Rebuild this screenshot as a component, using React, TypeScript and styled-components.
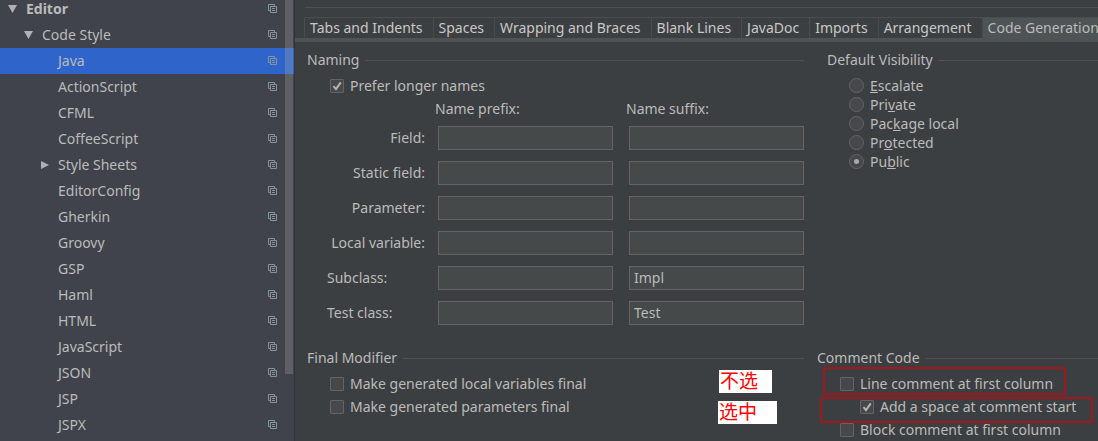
import React from "react";
import styled, { createGlobalStyle, css } from "styled-components";

const c = {
  panel: "#3c3f41",
  tree: "#40434b",
  selected: "#2f65ca",
  text: "#bbbbbb",
  rule: "#515151",
  field: "#45494a",
  fieldBorder: "#646464",
  tabActive: "#4e5354",
  tabBorder: "#4a4c4d",
  mark: "#a31619",
};

const GlobalStyle = createGlobalStyle`
  *, *::before, *::after { box-sizing: border-box; }
  body {
    margin: 0;
    background: ${c.panel};
    color: ${c.text};
    font: 14px/20px "Noto Sans", "Noto Sans CJK SC", sans-serif;
  }
`;

const Window = styled.div`
  display: flex;
  height: 100vh;
  overflow: hidden;
`;

const Sidebar = styled.nav`
  position: relative;
  flex: none;
  width: 295px;
  overflow: hidden;
  background: ${c.tree};
  border-right: 1px solid #323436;
`;

const Tree = styled.ul`
  margin: -4px 0 0;
  padding: 0;
  list-style: none;
`;

const TreeLink = styled.a<{ $level: number; $bold?: boolean; $selected?: boolean }>`
  display: flex;
  align-items: center;
  gap: 8px;
  height: 26px;
  padding: 0 16px 0 ${(p) => 8 + p.$level * 16}px;
  color: ${c.text};
  text-decoration: none;
  font-weight: ${(p) => (p.$bold ? 700 : 400)};
  background: ${(p) => (p.$selected ? c.selected : "transparent")};
`;

const Arrow = styled.svg`
  flex: none;
  width: 10px;
  height: 10px;
  fill: #afb1b3;
`;

const TreeLabel = styled.span`
  flex: 1;
`;

const CopyGlyph = styled.svg`
  flex: none;
  width: 10px;
  height: 10px;
  fill: none;
  stroke: #87939a;
`;

const ScrollThumb = styled.div`
  position: absolute;
  top: 0;
  right: 1px;
  width: 8px;
  height: 374px;
  background: rgba(166, 166, 166, 0.3);
`;

const Main = styled.main`
  flex: 1;
  min-width: 0;
  padding-top: 7px;
`;

const TopRule = styled.div`
  height: 1px;
  margin-left: 10px;
  background: ${c.rule};
`;

const TabBar = styled.div`
  display: flex;
  margin-top: 9px;
  padding-left: 9px;
  overflow: hidden;
  border-bottom: 4px solid ${c.tabActive};
`;

const Tab = styled.button<{ $active?: boolean }>`
  flex: none;
  height: 21px;
  padding: 0 10px 0 5px;
  border: solid ${c.tabBorder};
  border-width: 1px 0 0 1px;
  background: ${(p) => (p.$active ? c.tabActive : "transparent")};
  color: ${(p) => (p.$active ? c.text : "#c8c8c8")};
  font: inherit;
  text-align: left;
  white-space: nowrap;

  &:last-child {
    flex: 1 0 auto;
  }
`;

const Columns = styled.div<{ $gap: number }>`
  display: grid;
  grid-template-columns: minmax(0, 497fr) minmax(0, ${(p) => 294 - p.$gap}fr);
  column-gap: ${(p) => p.$gap}px;
  padding-left: 12px;
`;

const Panel = styled.div`
  display: flex;
  flex-direction: column;
  gap: 23px;
  padding-top: 8px;
`;

const Group = styled.section`
  min-width: 0;
`;

const GroupTitle = styled.h2`
  display: flex;
  align-items: center;
  gap: 6px;
  margin: 0 0 4px;
  font-size: 14px;
  font-weight: 400;
  white-space: nowrap;

  &::after {
    content: "";
    flex: 1;
    height: 1px;
    background: ${c.rule};
  }
`;

const OptionRow = styled.div<{ $indent?: boolean }>`
  position: relative;
  display: flex;
  align-items: center;
  height: 23px;
  padding-left: ${(p) => (p.$indent ? 43 : 23)}px;
`;

const OptionLabel = styled.label`
  display: flex;
  align-items: center;
  gap: 6px;
  white-space: nowrap;
`;

const control = css`
  appearance: none;
  flex: none;
  display: grid;
  place-items: center;
  margin: 0;
  border: 1px solid ${c.fieldBorder};
  background: ${c.field};
`;

const TickBox = styled.input`
  ${control}
  width: 14px;
  height: 14px;
  border-radius: 1px;
`;

const TickHolder = styled.span`
  position: relative;
  display: flex;
`;

const Tick = styled.svg`
  position: absolute;
  inset: 0;
  width: 14px;
  height: 14px;
  fill: none;
  stroke: #b4b4b4;
  stroke-width: 2;
  pointer-events: none;
  visibility: hidden;

  input:checked + & {
    visibility: visible;
  }
`;

const RadioList = styled.div`
  padding: 2px 0 0 22px;
`;

const RadioLabel = styled(OptionLabel)`
  height: 19px;
`;

const RadioButton = styled.input`
  ${control}
  width: 15px;
  height: 15px;
  border-radius: 50%;

  &:checked::after {
    content: "";
    width: 5px;
    height: 5px;
    border-radius: 50%;
    background: #aaaaaa;
  }
`;

const NameGrid = styled.div`
  display: grid;
  grid-template-columns: 98px minmax(0, 1fr) minmax(0, 1fr);
  column-gap: 16px;
  row-gap: 11px;
  align-items: center;
  padding-left: 17px;
`;

const NameHead = styled.div`
  grid-column: 2;
  height: 18px;
  line-height: 24px;
  margin-left: -3px;

  & + & {
    grid-column: 3;
  }
`;

const NameLabel = styled.label<{ $start?: boolean }>`
  margin: 0 -3px 0 3px;
  text-align: ${(p) => (p.$start ? "left" : "right")};
  white-space: nowrap;
`;

const NameInput = styled.input`
  width: 100%;
  height: 24px;
  padding: 0 4px 2px;
  border: 1px solid ${c.fieldBorder};
  background: ${c.field};
  color: ${c.text};
  font: inherit;
  outline: none;
`;

const Outline = styled.span<{ $left: number; $top: number; $width: number; $height: number }>`
  position: absolute;
  left: ${(p) => p.$left}px;
  top: ${(p) => p.$top}px;
  width: ${(p) => p.$width}px;
  height: ${(p) => p.$height}px;
  border: 2px solid ${c.mark};
  border-radius: 2px;
  pointer-events: none;
`;

const Note = styled.span<{ $right: number; $top: number; $width: number }>`
  position: absolute;
  right: ${(p) => p.$right}px;
  top: ${(p) => p.$top}px;
  width: ${(p) => p.$width}px;
  height: 23px;
  padding-left: 1px;
  background: #ffffff;
  color: #ff0000;
  font: 19px/20px "Noto Sans CJK SC", sans-serif;
`;

type TreeItem = { name: string; level: number; arrow?: "down" | "right"; bold?: boolean; selected?: boolean };

const tree: TreeItem[] = [
  { name: "Editor", level: 0, arrow: "down", bold: true },
  { name: "Code Style", level: 1, arrow: "down" },
  { name: "Java", level: 2, selected: true },
  { name: "ActionScript", level: 2 },
  { name: "CFML", level: 2 },
  { name: "CoffeeScript", level: 2 },
  { name: "Style Sheets", level: 2, arrow: "right" },
  { name: "EditorConfig", level: 2 },
  { name: "Gherkin", level: 2 },
  { name: "Groovy", level: 2 },
  { name: "GSP", level: 2 },
  { name: "Haml", level: 2 },
  { name: "HTML", level: 2 },
  { name: "JavaScript", level: 2 },
  { name: "JSON", level: 2 },
  { name: "JSP", level: 2 },
  { name: "JSPX", level: 2 },
];

const tabs = [
  "Tabs and Indents",
  "Spaces",
  "Wrapping and Braces",
  "Blank Lines",
  "JavaDoc",
  "Imports",
  "Arrangement",
  "Code Generation",
];

const names = [
  { label: "Field:", suffix: "" },
  { label: "Static field:", suffix: "" },
  { label: "Parameter:", suffix: "" },
  { label: "Local variable:", suffix: "" },
  { label: "Subclass:", suffix: "Impl", start: true },
  { label: "Test class:", suffix: "Test", start: true },
];

// Each visibility is split around its mnemonic letter.
const visibilities = [
  ["", "E", "scalate"],
  ["Pri", "v", "ate"],
  ["Pac", "k", "age local"],
  ["Pr", "o", "tected"],
  ["Pu", "b", "lic"],
];

function Option({ label, checked, indent, children }: {
  label: string;
  checked?: boolean;
  indent?: boolean;
  children?: React.ReactNode;
}) {
  return (
    <OptionRow $indent={indent}>
      <OptionLabel>
        <TickHolder>
          <TickBox type="checkbox" defaultChecked={checked} />
          <Tick viewBox="0 0 14 14" aria-hidden="true">
            <path d="M3.5 7.2 6 10.2 10.8 3.4" />
          </Tick>
        </TickHolder>
        {label}
      </OptionLabel>
      {children}
    </OptionRow>
  );
}

export default function App() {
  return (
    <>
      <GlobalStyle />
      <Window>
        <Sidebar aria-label="Settings">
          <Tree>
            {tree.map((item) => (
              <li key={item.name}>
                <TreeLink
                  href="#"
                  $level={item.level}
                  $bold={item.bold}
                  $selected={item.selected}
                  aria-current={item.selected ? "page" : undefined}
                >
                  <Arrow viewBox="0 0 10 10" aria-hidden="true">
                    {item.arrow === "down" && <path d="M0 1h9L4.500 9z" />}
                    {item.arrow === "right" && <path d="M1 1v8l8-4z" />}
                  </Arrow>
                  <TreeLabel>{item.name}</TreeLabel>
                  <CopyGlyph viewBox="0 0 10 10" aria-hidden="true">
                    <path d="M2 6.500H.5v-6h6V2M2.500 2.500h6v6h-6zM4 4.500h3M4 6.500h3" />
                  </CopyGlyph>
                </TreeLink>
              </li>
            ))}
          </Tree>
          <ScrollThumb />
        </Sidebar>
        <Main>
          <TopRule />
          <TabBar role="tablist">
            {tabs.map((tab, i) => {
              const active = i === tabs.length - 1;
              return (
                <Tab key={tab} role="tab" aria-selected={active} $active={active}>
                  {tab}
                </Tab>
              );
            })}
          </TabBar>
          <Panel>
            <Columns $gap={23}>
              <Group>
                <GroupTitle>Naming</GroupTitle>
                <Option label="Prefer longer names" checked />
                <NameGrid>
                  <NameHead>Name prefix:</NameHead>
                  <NameHead>Name suffix:</NameHead>
                  {names.map((n, i) => (
                    <React.Fragment key={n.label}>
                      <NameLabel htmlFor={`prefix-${i}`} $start={n.start}>
                        {n.label}
                      </NameLabel>
                      <NameInput id={`prefix-${i}`} type="text" />
                      <NameInput type="text" defaultValue={n.suffix} aria-label={`${n.label} name suffix`} />
                    </React.Fragment>
                  ))}
                </NameGrid>
              </Group>
              <Group>
                <GroupTitle>Default Visibility</GroupTitle>
                <RadioList role="radiogroup" aria-label="Default Visibility">
                  {visibilities.map(([before, key, after]) => (
                    <RadioLabel key={key}>
                      <RadioButton type="radio" name="visibility" defaultChecked={key === "b"} />
                      <span>
                        {before}
                        <u>{key}</u>
                        {after}
                      </span>
                    </RadioLabel>
                  ))}
                </RadioList>
              </Group>
            </Columns>
            <Columns $gap={13}>
              <Group>
                <GroupTitle>Final Modifier</GroupTitle>
                <Option label="Make generated local variables final">
                  <Note $right={32} $top={-2} $width={53}>不选</Note>
                </Option>
                <Option label="Make generated parameters final">
                  <Note $right={27} $top={6} $width={59}>选中</Note>
                </Option>
              </Group>
              <Group>
                <GroupTitle>Comment Code</GroupTitle>
                <Option label="Line comment at first column">
                  <Outline $left={6} $top={-5} $width={243} $height={28} />
                </Option>
                <Option label="Add a space at comment start" checked indent>
                  <Outline $left={3} $top={2} $width={273} $height={26} />
                </Option>
                <Option label="Block comment at first column" />
              </Group>
            </Columns>
          </Panel>
        </Main>
      </Window>
    </>
  );
}
